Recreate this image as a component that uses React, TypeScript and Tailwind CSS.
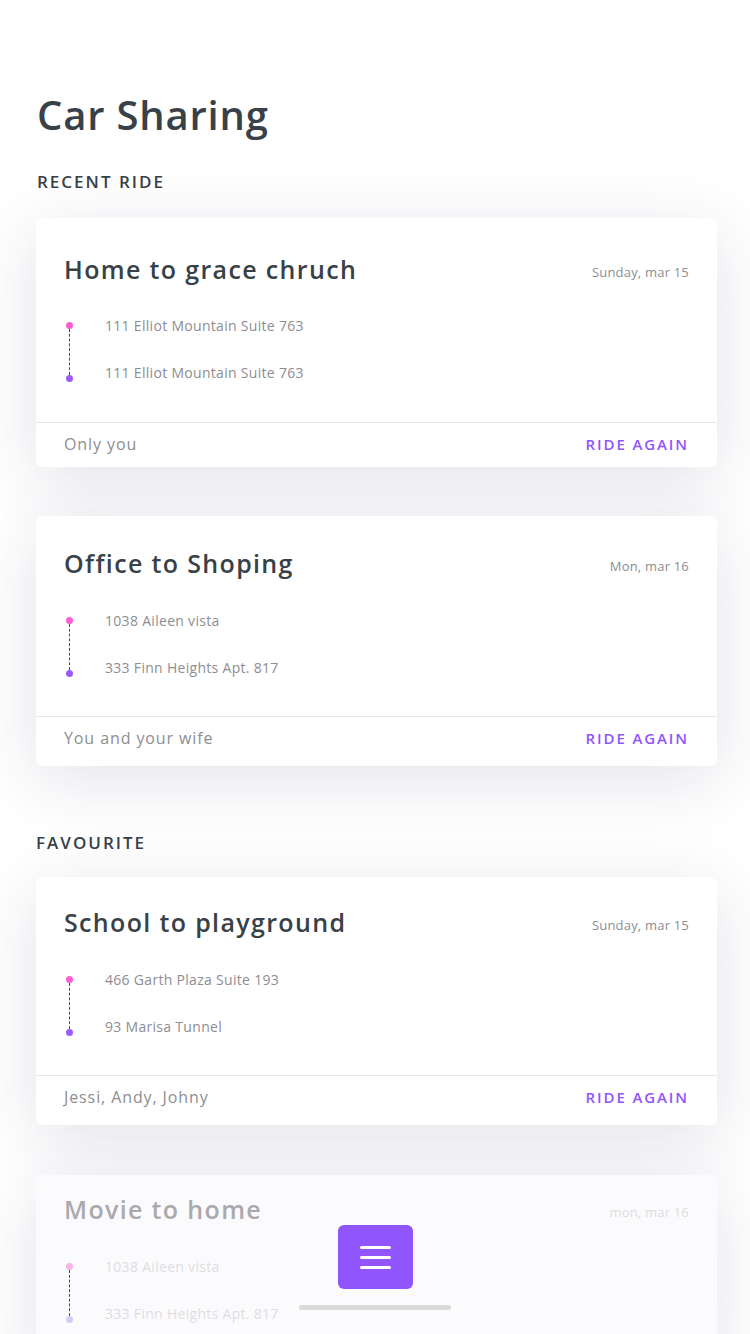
import React from "react";

type Ride = {
  title: string;
  date: string;
  from: string;
  to: string;
  people: string;
  padTop: string;
  gap: string;
  padBottom: string;
  footer: string;
  faded?: boolean;
};

const recent: Ride[] = [
  {
    title: "Home to grace chruch",
    date: "Sunday, mar 15",
    from: "111 Elliot Mountain Suite 763",
    to: "111 Elliot Mountain Suite 763",
    people: "Only you",
    padTop: "pt-[35px]",
    gap: "mt-[31px]",
    padBottom: "pb-[39px]",
    footer: "h-[45px]",
  },
  {
    title: "Office to Shoping",
    date: "Mon, mar 16",
    from: "1038 Aileen vista",
    to: "333 Finn Heights Apt. 817",
    people: "You and your wife",
    padTop: "pt-[31px]",
    gap: "mt-[32px]",
    padBottom: "pb-[38px]",
    footer: "h-[50px]",
  },
];

const favourite: Ride[] = [
  {
    title: "School to playground",
    date: "Sunday, mar 15",
    from: "466 Garth Plaza Suite 193",
    to: "93 Marisa Tunnel",
    people: "Jessi, Andy, Johny",
    padTop: "pt-[29px]",
    gap: "mt-[32px]",
    padBottom: "pb-[38px]",
    footer: "h-[50px]",
  },
  {
    title: "Movie to home",
    date: "mon, mar 16",
    from: "1038 Aileen vista",
    to: "333 Finn Heights Apt. 817",
    people: "You and your wife",
    padTop: "pt-[18px]",
    gap: "mt-[32px]",
    padBottom: "pb-[38px]",
    footer: "h-[50px]",
    faded: true,
  },
];

function RideCard({ ride }: { ride: Ride }) {
  const faded = ride.faded;
  return (
    <div
      className={`rounded-[6px] ${
        faded ? "bg-[#fbfbfd]" : "bg-white"
      } shadow-[0_14px_70px_rgba(40,40,90,0.13)]`}
    >
      <div className={`px-7 ${ride.padTop} ${ride.padBottom}`}>
        <div className="flex items-center justify-between">
          <h2
            className={`text-[25px] leading-[32px] font-semibold tracking-[1.35px] ${
              faded ? "text-[#aaaaae]" : "text-[#384148]"
            }`}
          >
            {ride.title}
          </h2>
          <span className={`pt-[6px] text-[13px] leading-[20px] tracking-[0.2px] ${faded ? "text-[#dcdce0]" : "text-[#8d8d92]"}`}>
            {ride.date}
          </span>
        </div>
        <div className={`${ride.gap} flex`}>
          <div className="flex w-[41px] flex-col items-start pl-[2px] pt-[6px]">
            <span className={`h-[7px] w-[7px] rounded-full ${faded ? "bg-[#fab3e8]" : "bg-[#ff5ed3]"}`} />
            <span className="ml-[3px] h-[46px] border-l border-dashed border-[#4a4a52]" />
            <span className={`h-[7px] w-[7px] rounded-full ${faded ? "bg-[#d6cbf2]" : "bg-[#9a5cff]"}`} />
          </div>
          <div className={`flex flex-col gap-[27px] text-[14px] leading-[20px] tracking-[0.3px] ${faded ? "text-[#dedee2]" : "text-[#8d8d92]"}`}>
            <span>{ride.from}</span>
            <span>{ride.to}</span>
          </div>
        </div>
      </div>
      {!faded && (
        <div className={`flex ${ride.footer} items-start justify-between border-t border-[#e6e6ea] px-7 pt-[11px]`}>
          <span className="text-[16px] leading-[20px] tracking-[0.9px] text-[#8d8d92]">{ride.people}</span>
          <button className="text-[15px] leading-[20px] font-semibold tracking-[1.9px] text-[#9155fd]">
            RIDE AGAIN
          </button>
        </div>
      )}
    </div>
  );
}

export default function App() {
  return (
    <div
      className="relative h-[1334px] overflow-hidden bg-white"
      style={{ fontFamily: '"Open Sans", "Liberation Sans", sans-serif' }}
    >
      <div className="pl-9 pr-[33px] pt-[91px]">
        <h1 className="pl-[1px] text-[40px] leading-[48px] font-semibold tracking-[0.8px] text-[#384148]">
          Car Sharing
        </h1>

        <h3 className="mt-[33px] pl-[1px] text-[17px] leading-[20px] font-semibold tracking-[2px] text-[#384148]">
          RECENT RIDE
        </h3>
        <div className="mt-[26px] flex flex-col gap-[49px]">
          {recent.map((r) => (
            <RideCard key={r.title} ride={r} />
          ))}
        </div>

        <h3 className="mt-[67px] text-[17px] leading-[20px] font-semibold tracking-[2px] text-[#384148]">
          FAVOURITE
        </h3>
        <div className="mt-[24px] flex flex-col gap-[50px]">
          {favourite.map((r) => (
            <RideCard key={r.title} ride={r} />
          ))}
        </div>
      </div>

      <div className="absolute bottom-0 left-0 right-0 flex h-[109px] flex-col items-center">
        <button className="flex h-[64px] w-[75px] flex-col items-center justify-center gap-[7px] rounded-[6px] bg-[#9155fd]">
          <span className="h-[3px] w-[31px] rounded-full bg-white" />
          <span className="h-[3px] w-[31px] rounded-full bg-white" />
          <span className="h-[3px] w-[31px] rounded-full bg-white" />
        </button>
        <span className="mt-[16px] h-[5px] w-[152px] rounded-full bg-[#dadada]" />
      </div>
    </div>
  );
}
